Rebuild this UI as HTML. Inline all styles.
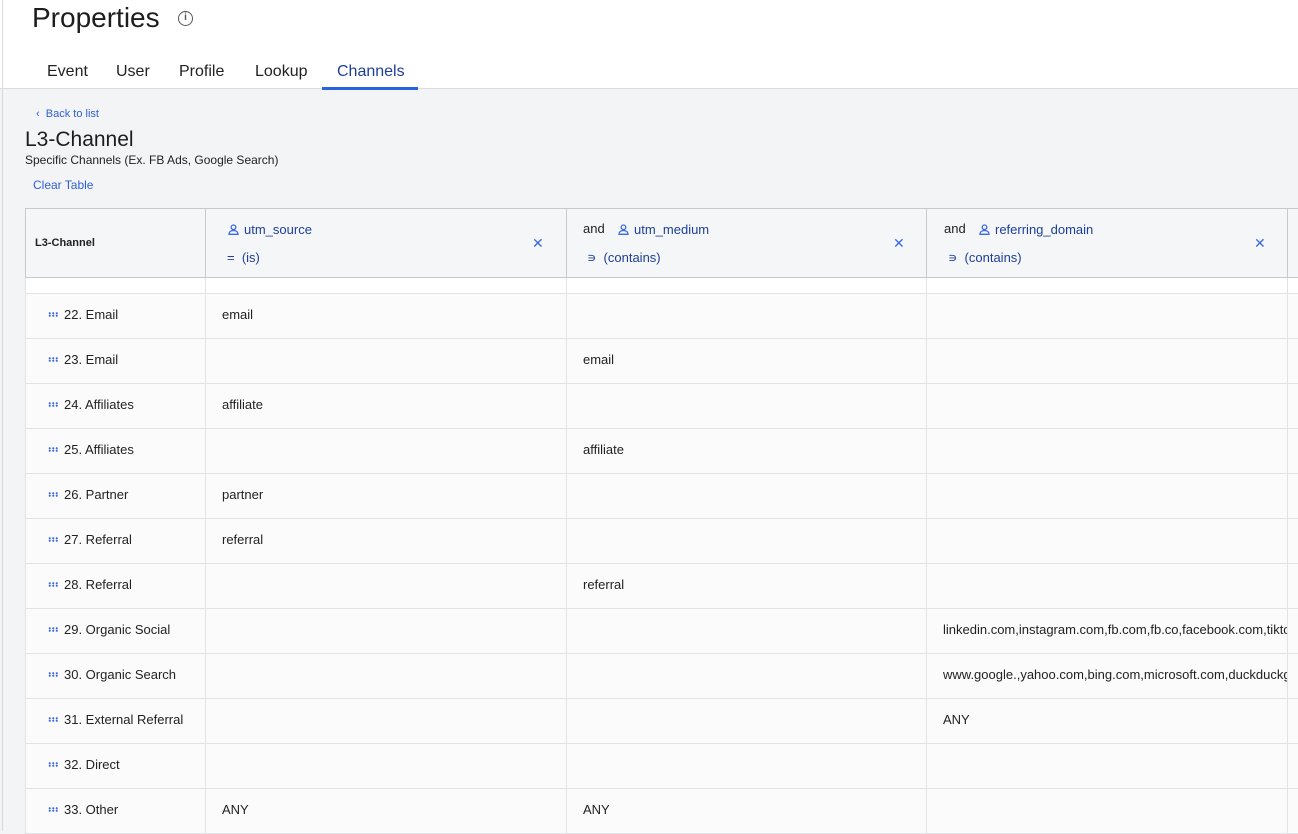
<!DOCTYPE html>
<html><head><style>
*{box-sizing:border-box;margin:0;padding:0}
body{width:1298px;height:831px;overflow:hidden;font-family:"Liberation Sans",sans-serif;background:#f3f4f6;position:relative;color:#222}
.top{position:absolute;left:0;top:0;width:1298px;height:89px;background:#fff;border-bottom:1px solid #dcdde0}
.vl{position:absolute;left:2px;top:0;width:1px;height:831px;background:#d8d9dc}
h1{position:absolute;left:32px;top:2px;font-size:28px;font-weight:400;color:#1d1d1f}
.info{position:absolute;left:178px;top:11px;width:15px;height:15px;border:1.6px solid #555;border-radius:50%;font-size:10px;text-align:center;line-height:12px;color:#555;font-weight:bold}
.tab{position:absolute;top:63px;font-size:16px;color:#222}
.ul{position:absolute;left:322px;top:87px;width:96px;height:3px;background:#2a63e0}
.a{color:#2f5fd6}
table{position:absolute;left:25px;top:208px;border-collapse:collapse;font-size:13px;background:#fbfbfc;table-layout:fixed;width:1300px}
td,th{border:1px solid #e2e3e6;height:45px;padding:0 0 3px 16px;text-align:left;white-space:nowrap;overflow:hidden}
th{background:#f5f6f8;height:69px;border-color:#c8c9cc;font-weight:normal;padding-bottom:0}
tr.sp td{height:16px;background:#fff;padding:0}
td:first-child{padding-left:22px}
.d{display:inline-block;width:10px;height:5px;margin-right:6px;vertical-align:2px;background:radial-gradient(circle,#3a6ae0 0.9px,transparent 1.2px) 0 0/3.5px 2.5px}
.f{color:#1d3f9a;font-size:13px;position:absolute}
.f svg{vertical-align:-1px;margin-right:5px}
.x{position:absolute;color:#3a6ae0;font-size:14px;top:235px}
</style></head><body>
<div class="top"></div><div class="vl"></div>
<h1>Properties</h1><div class="info">i</div>
<div class="tab" style="left:47px">Event</div><div class="tab" style="left:116px">User</div><div class="tab" style="left:179px">Profile</div><div class="tab" style="left:255px">Lookup</div><div class="tab" style="left:337px;color:#1d3f9a">Channels</div>
<div class="ul"></div>
<div class="a" style="position:absolute;left:36px;top:108px;font-size:11px">‹ &nbsp;Back to list</div>
<div style="position:absolute;left:25px;top:128px;font-size:21px;color:#1d1d1f">L3-Channel</div>
<div style="position:absolute;left:25px;top:153px;font-size:12px">Specific Channels (Ex. FB Ads, Google Search)</div>
<div class="a" style="position:absolute;left:33px;top:178px;font-size:12px">Clear Table</div>
<table>
<colgroup><col style="width:180px"><col style="width:361px"><col style="width:360px"><col style="width:361px"><col style="width:38px"></colgroup>
<tr><th style="font-weight:bold;font-size:11px;padding-left:9px">L3-Channel</th><th></th><th></th><th></th><th></th></tr>
<tr class="sp"><td></td><td></td><td></td><td></td><td></td></tr>
<tr><td><span class="d"></span>22. Email</td><td>email</td><td></td><td></td><td></td></tr>
<tr><td><span class="d"></span>23. Email</td><td></td><td>email</td><td></td><td></td></tr>
<tr><td><span class="d"></span>24. Affiliates</td><td>affiliate</td><td></td><td></td><td></td></tr>
<tr><td><span class="d"></span>25. Affiliates</td><td></td><td>affiliate</td><td></td><td></td></tr>
<tr><td><span class="d"></span>26. Partner</td><td>partner</td><td></td><td></td><td></td></tr>
<tr><td><span class="d"></span>27. Referral</td><td>referral</td><td></td><td></td><td></td></tr>
<tr><td><span class="d"></span>28. Referral</td><td></td><td>referral</td><td></td><td></td></tr>
<tr><td><span class="d"></span>29. Organic Social</td><td></td><td></td><td>linkedin.com,instagram.com,fb.com,fb.co,facebook.com,tiktok</td><td></td></tr>
<tr><td><span class="d"></span>30. Organic Search</td><td></td><td></td><td>www.google.,yahoo.com,bing.com,microsoft.com,duckduckgo</td><td></td></tr>
<tr><td><span class="d"></span>31. External Referral</td><td></td><td></td><td>ANY</td><td></td></tr>
<tr><td><span class="d"></span>32. Direct</td><td></td><td></td><td></td><td></td></tr>
<tr><td><span class="d"></span>33. Other</td><td>ANY</td><td>ANY</td><td></td><td></td></tr>
</table>
<div style="left:228px;top:222px" class="f"><svg width="11" height="11" viewBox="0 0 11 11" fill="none" stroke="#3a6ae0" stroke-width="1.3"><circle cx="5.5" cy="3.3" r="2.3"/><path d="M1 10.3h9c0-2.5-2-3.8-4.5-3.8S1 7.8 1 10.3z"/></svg>utm_source</div>
<div style="left:227px;top:250px" class="f">=&nbsp; (is)</div>
<div class="x" style="left:532px">✕</div>
<div style="position:absolute;left:583px;top:221px;font-size:13px">and</div>
<div style="left:618px;top:222px" class="f"><svg width="11" height="11" viewBox="0 0 11 11" fill="none" stroke="#3a6ae0" stroke-width="1.3"><circle cx="5.5" cy="3.3" r="2.3"/><path d="M1 10.3h9c0-2.5-2-3.8-4.5-3.8S1 7.8 1 10.3z"/></svg>utm_medium</div>
<div style="left:587px;top:250px" class="f">∍&nbsp; (contains)</div>
<div class="x" style="left:893px">✕</div>
<div style="position:absolute;left:944px;top:221px;font-size:13px">and</div>
<div style="left:979px;top:222px" class="f"><svg width="11" height="11" viewBox="0 0 11 11" fill="none" stroke="#3a6ae0" stroke-width="1.3"><circle cx="5.5" cy="3.3" r="2.3"/><path d="M1 10.3h9c0-2.5-2-3.8-4.5-3.8S1 7.8 1 10.3z"/></svg>referring_domain</div>
<div style="left:948px;top:250px" class="f">∍&nbsp; (contains)</div>
<div class="x" style="left:1254px">✕</div>
</body></html>
